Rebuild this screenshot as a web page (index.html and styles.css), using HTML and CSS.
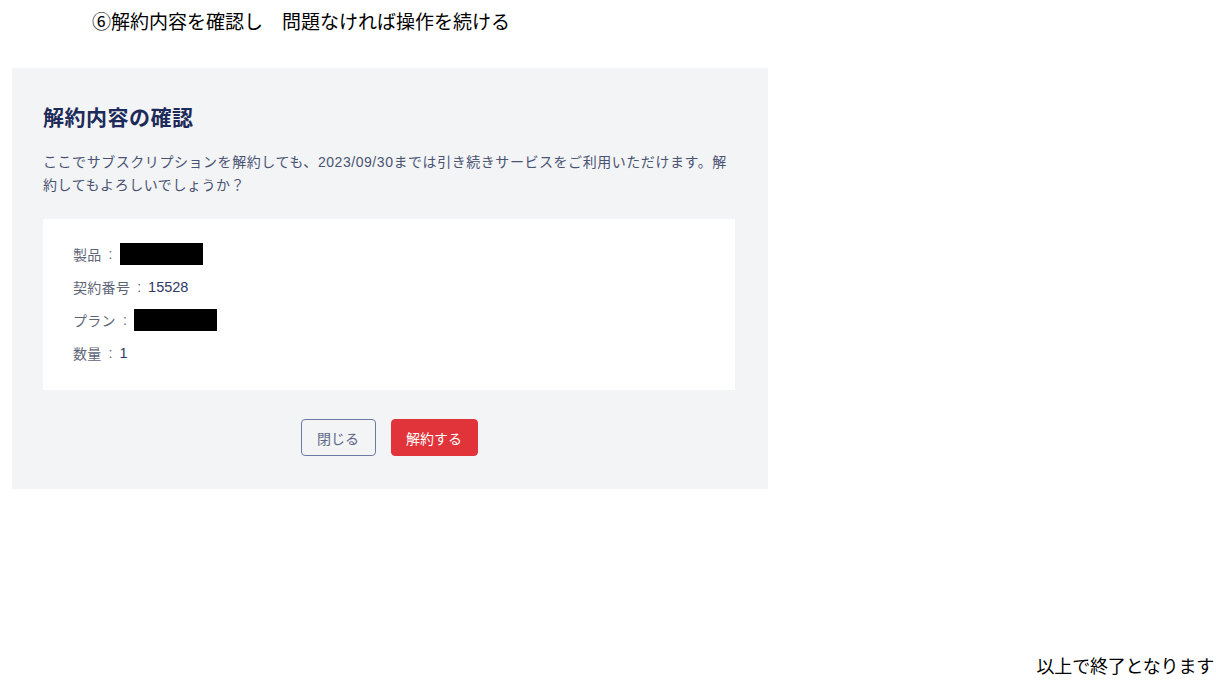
FILE: index.html
```html
<!DOCTYPE html>
<html lang="ja">
<head>
<meta charset="utf-8">
<title>解約内容の確認</title>
<link rel="stylesheet" href="styles.css">
</head>
<body>
<div class="step">⑥解約内容を確認し　問題なければ操作を続ける</div>
<section class="panel">
  <h1 class="title">解約内容の確認</h1>
  <p class="desc">ここでサブスクリプションを解約しても、2023/09/30までは引き続きサービスをご利用いただけます。解約してもよろしいでしょうか？</p>
  <div class="details">
    <div class="row"><span class="label">製品</span><span class="colon">:</span><span class="redact"></span></div>
    <div class="row"><span class="label">契約番号</span><span class="colon">:</span><span class="value">15528</span></div>
    <div class="row"><span class="label">プラン</span><span class="colon">:</span><span class="redact"></span></div>
    <div class="row"><span class="label">数量</span><span class="colon">:</span><span class="value">1</span></div>
  </div>
  <div class="actions">
    <button class="btn btn-close">閉じる</button>
    <button class="btn btn-cancel">解約する</button>
  </div>
</section>
<div class="end">以上で終了となります</div>
</body>
</html>
```
FILE: styles.css
```css
html, body {
  margin: 0;
  padding: 0;
  background: #ffffff;
}
body {
  width: 1216px;
  height: 687px;
  overflow: hidden;
  font-family: "Noto Sans CJK JP", sans-serif;
}
.step {
  padding: 8px 0 0 92px;
  height: 68px;
  box-sizing: border-box;
  font-size: 19px;
  line-height: 26px;
  color: #000;
}
.panel {
  margin-left: 12px;
  width: 756px;
  box-sizing: border-box;
  background: #f3f4f6;
  padding: 36px 33px 33px 31px;
  font-family: "Liberation Sans", "Noto Sans CJK JP", sans-serif;
}
.title {
  margin: 0;
  font-size: 21px;
  line-height: 28px;
  letter-spacing: 0.5px;
  font-weight: 700;
  color: #1e2b5a;
}
.desc {
  margin: 19px 0 0;
  font-size: 14px;
  line-height: 23px;
  letter-spacing: 0.55px;
  color: #4a5372;
}
.details {
  margin-top: 22px;
  background: #ffffff;
  padding: 24px 30px 26px;
  display: flex;
  flex-direction: column;
  gap: 11px;
}
.row {
  display: flex;
  align-items: center;
  height: 22px;
  font-size: 14px;
  color: #4a5372;
}
.label {
  color: #5f6678;
  letter-spacing: 0.3px;
}
.colon {
  margin: 0 7px 0 7px;
  color: #5f6678;
}
.value {
  color: #2e3a66;
  font-size: 14.5px;
}
.redact {
  width: 83px;
  height: 22px;
  background: #000;
}
.actions {
  margin-top: 29px;
  display: flex;
  justify-content: center;
  gap: 15px;
}
.btn {
  height: 37px;
  font-family: "Liberation Sans", "Noto Sans CJK JP", sans-serif;
  font-size: 14px;
  border-radius: 4px;
  padding: 0;
  white-space: nowrap;
  cursor: pointer;
}
.btn-close {
  width: 75px;
  background: #f3f4f6;
  border: 1px solid #6d7aa6;
  color: #5d6786;
}
.btn-cancel {
  width: 87px;
  background: #e1343a;
  border: 1px solid #e1343a;
  color: #ffffff;
}
.end {
  margin-top: 163px;
  text-align: right;
  padding-right: 2px;
  font-size: 18px;
  line-height: 26px;
  letter-spacing: -0.2px;
  color: #000;
}
```
